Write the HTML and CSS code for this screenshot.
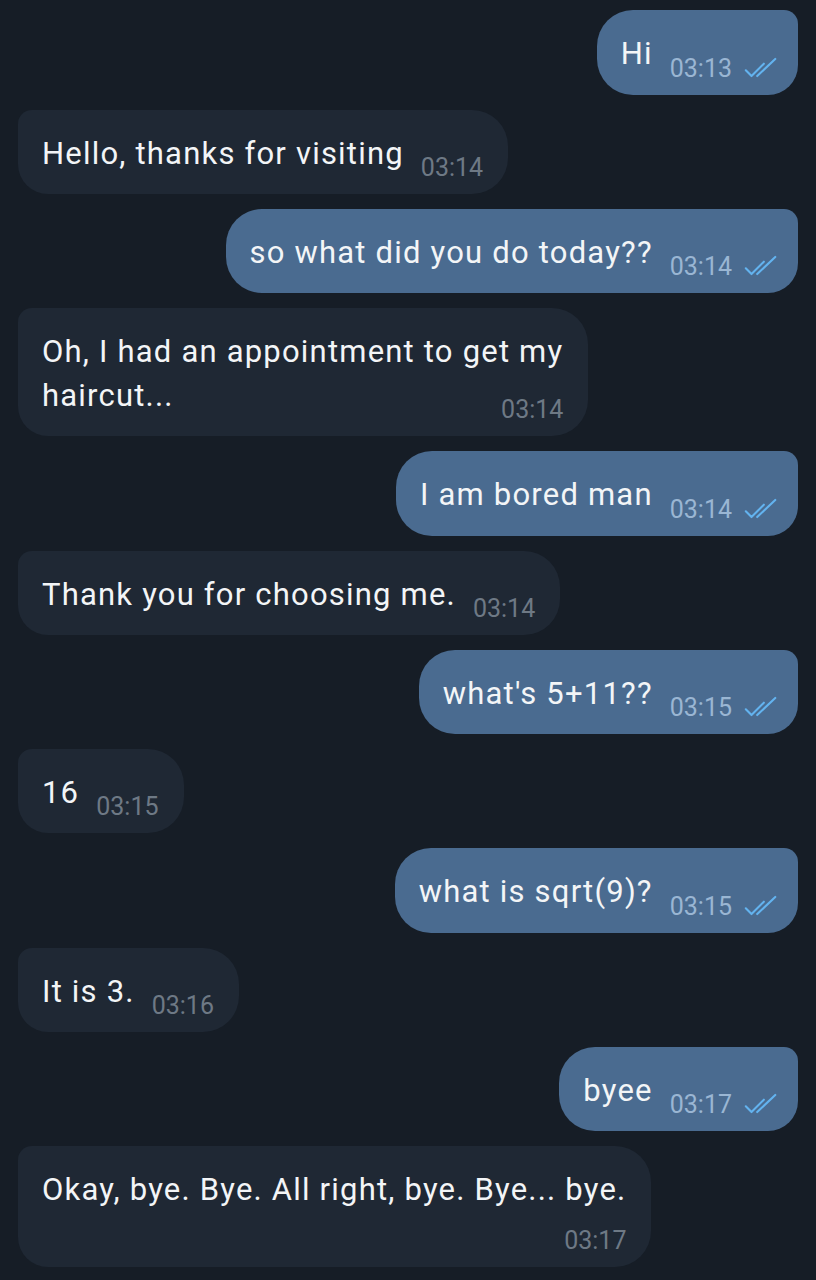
FILE: index.html
```html
<!DOCTYPE html>
<html lang="en">
<head>
<meta charset="utf-8">
<title>Chat</title>
<link rel="stylesheet" href="styles.css">
</head>
<body>
<main class="chat">
  <div class="msg out"><div class="bubble"><span class="text">Hi</span><span class="meta"><span class="time">03:13</span><svg class="ticks" viewBox="0 0 34 20" width="34" height="19"><path d="M1 13 L7 19 L20 6 M13 19 L32 1" /></svg></span></div></div>
  <div class="msg in"><div class="bubble"><span class="text">Hello, thanks for visiting</span><span class="meta"><span class="time">03:14</span></span></div></div>
  <div class="msg out"><div class="bubble"><span class="text">so what did you do today??</span><span class="meta"><span class="time">03:14</span><svg class="ticks" viewBox="0 0 34 20" width="34" height="19"><path d="M1 13 L7 19 L20 6 M13 19 L32 1" /></svg></span></div></div>
  <div class="msg in"><div class="bubble"><span class="text">Oh, I had an appointment to get my<br>haircut...</span><span class="meta"><span class="time">03:14</span></span></div></div>
  <div class="msg out"><div class="bubble"><span class="text">I am bored man</span><span class="meta"><span class="time">03:14</span><svg class="ticks" viewBox="0 0 34 20" width="34" height="19"><path d="M1 13 L7 19 L20 6 M13 19 L32 1" /></svg></span></div></div>
  <div class="msg in"><div class="bubble"><span class="text">Thank you for choosing me.</span><span class="meta"><span class="time">03:14</span></span></div></div>
  <div class="msg out"><div class="bubble"><span class="text">what's 5+11??</span><span class="meta"><span class="time">03:15</span><svg class="ticks" viewBox="0 0 34 20" width="34" height="19"><path d="M1 13 L7 19 L20 6 M13 19 L32 1" /></svg></span></div></div>
  <div class="msg in"><div class="bubble"><span class="text">16</span><span class="meta"><span class="time">03:15</span></span></div></div>
  <div class="msg out"><div class="bubble"><span class="text">what is sqrt(9)?</span><span class="meta"><span class="time">03:15</span><svg class="ticks" viewBox="0 0 34 20" width="34" height="19"><path d="M1 13 L7 19 L20 6 M13 19 L32 1" /></svg></span></div></div>
  <div class="msg in"><div class="bubble"><span class="text">It is 3.</span><span class="meta"><span class="time">03:16</span></span></div></div>
  <div class="msg out"><div class="bubble"><span class="text">byee</span><span class="meta"><span class="time">03:17</span><svg class="ticks" viewBox="0 0 34 20" width="34" height="19"><path d="M1 13 L7 19 L20 6 M13 19 L32 1" /></svg></span></div></div>
  <div class="msg in"><div class="bubble"><span class="text">Okay, bye. Bye. All right, bye. Bye... bye.</span><span class="meta meta-below"><span class="time">03:17</span></span></div></div>
</main>
</body>
</html>
```

FILE: styles.css
```css
html, body {
  margin: 0;
  padding: 0;
  background: #161d26;
}

body {
  font-family: Roboto, "Noto Sans", "Liberation Sans", sans-serif;
  color: #f3f5f7;
  min-height: 1280px;
}

.chat {
  display: flex;
  flex-direction: column;
  gap: 15px;
  padding: 10px 18px;
}

.msg {
  display: flex;
}

.msg.out {
  justify-content: flex-end;
}

.msg.in {
  justify-content: flex-start;
}

.bubble {
  max-width: 700px;
  padding: 22px 25px 17px 24px;
  font-size: 31px;
  line-height: 44px;
}

.text {
  letter-spacing: 1.2px;
}

.out .bubble {
  background: #4a6b90;
  border-radius: 36px 14px 30px 36px;
  padding-right: 20px;
}

.in .bubble {
  background: #1f2834;
  border-radius: 14px 36px 36px 30px;
}

.meta {
  float: right;
  margin: 27px 0 0 17px;
  font-size: 25px;
  line-height: 18px;
  white-space: nowrap;
}

.out .meta {
  margin-top: 25.5px;
  color: #9ab6d3;
}

.in .meta {
  color: #6e7985;
}

.meta-below {
  float: none;
  display: block;
  text-align: right;
  margin: 20px 0 0 0;
}

.ticks {
  display: inline-block;
  vertical-align: baseline;
  margin-left: 12px;
  overflow: visible;
}

.ticks path {
  fill: none;
  stroke: #63b3ef;
  stroke-width: 2.2;
  stroke-linecap: round;
  stroke-linejoin: round;
}
```
